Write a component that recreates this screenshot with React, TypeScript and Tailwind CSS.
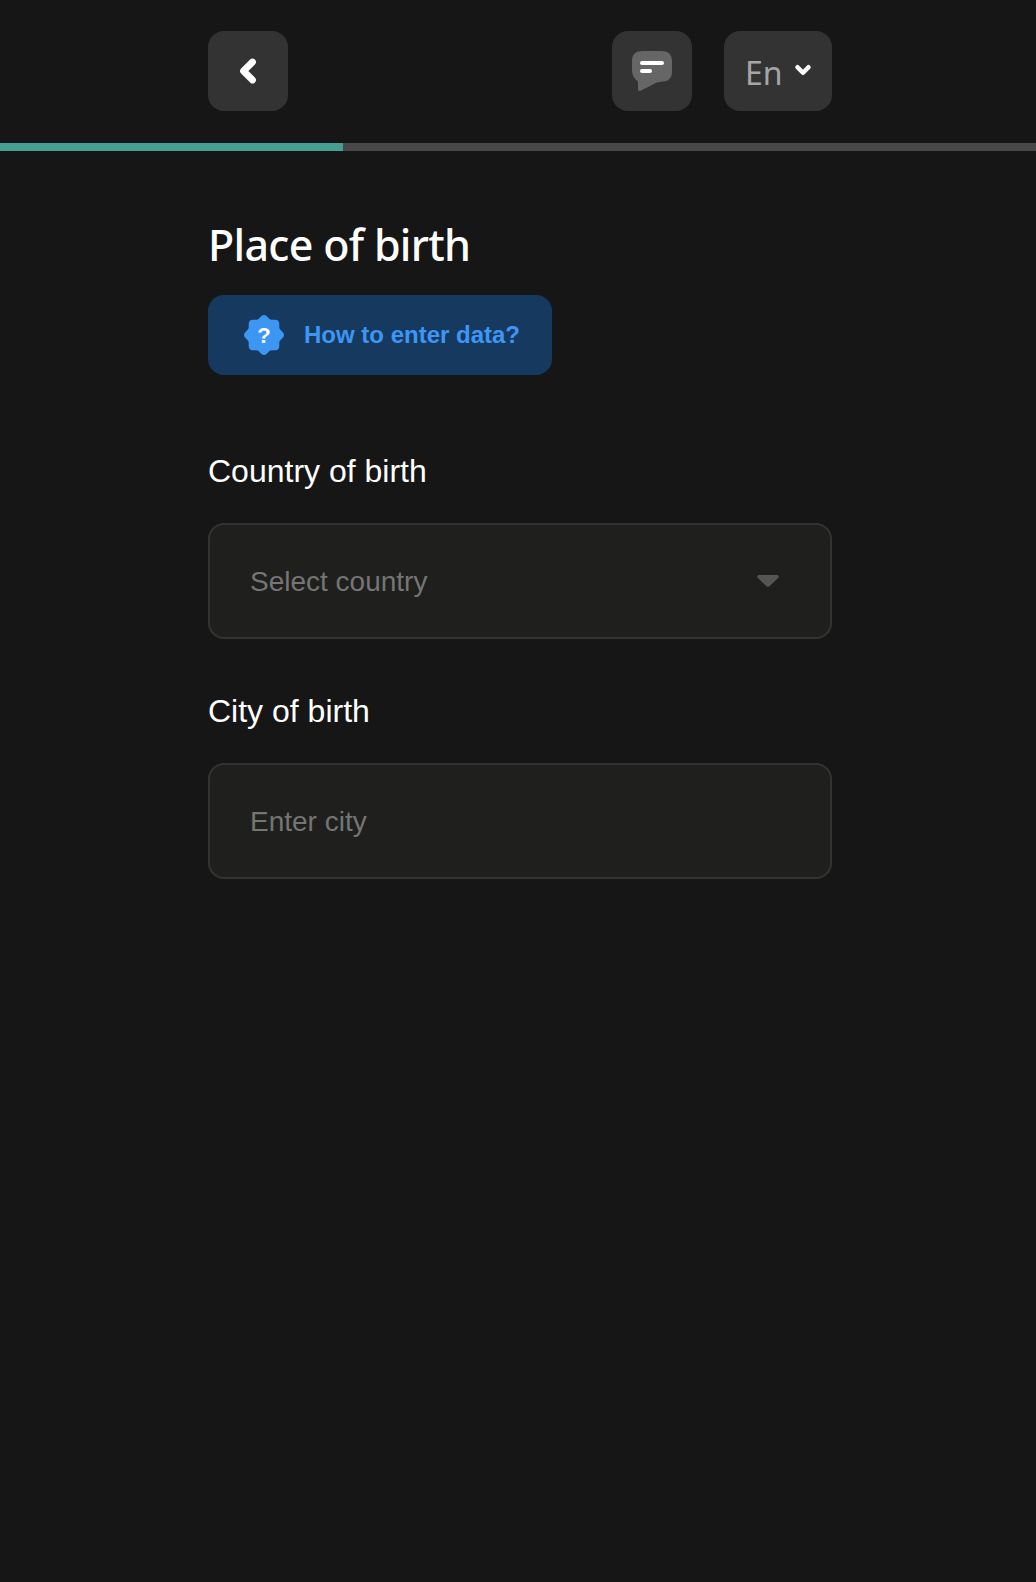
import React from 'react';
import { ChevronLeft, ChevronDown } from 'lucide-react';

const sans = "font-['Liberation_Sans',Arial,sans-serif]";
const display = "font-['Noto_Sans',sans-serif]";

const fieldBox =
  'flex h-[116px] w-full items-center justify-between rounded-[16px] border-2 border-[#333333] bg-[#1f1f1e] pl-[40px] pr-[51px]';

// wavy badge outline, 8 soft lobes
const badgePath = Array.from({ length: 96 }, (_, i) => {
  const a = (i / 96) * Math.PI * 2;
  const r = 18.4 + 1.6 * Math.cos(8 * a);
  const x = 20 + r * Math.sin(a);
  const y = 20 - r * Math.cos(a);
  return `${i === 0 ? 'M' : 'L'}${x.toFixed(2)} ${y.toFixed(2)}`;
}).join(' ') + ' Z';

const ChatIcon = () => (
  <svg width="40" height="40" viewBox="0 0 40 40" aria-hidden="true">
    <path
      d="M11 0h18c7 0 11 3 11 10v10c0 7-3 10-9 10.500-5 .3-8 1.500-11 3.500l-12 6c-1 .3-2-.2-2-1.500v-8C2 28 0 24 0 19V10C0 3 4 0 11 0z"
      fill="#666666"
    />
    <rect x="8" y="10" width="24" height="4" rx="2" fill="#ffffff" />
    <rect x="8" y="18" width="12" height="4" rx="2" fill="#ffffff" />
  </svg>
);

const HelpBadge = () => (
  <svg width="40" height="40" viewBox="0 0 40 40" aria-hidden="true">
    <path d={badgePath} fill="#3e96f4" />
    <text x="20" y="28" textAnchor="middle" fontSize="22" fontWeight="700" fill="#ffffff" fontFamily="Liberation Sans, Arial, sans-serif">
      ?
    </text>
  </svg>
);

const App: React.FC = () => {
  return (
    <div className={`min-h-[1582px] w-full bg-[#161616] ${sans}`}>
      {/* Top bar */}
      <header className="flex h-[143px] items-start pl-[208px] pr-[204px] pt-[31px]">
        <button className="flex h-[80px] w-[80px] items-center justify-center rounded-[16px] bg-[#333333]">
          <ChevronLeft size={36} strokeWidth={4.5} className="text-white" />
        </button>
        <button className="ml-auto flex h-[80px] w-[80px] items-center justify-center rounded-[16px] bg-[#333333]">
          <ChatIcon />
        </button>
        <button className="ml-[32px] flex h-[80px] w-[108px] items-center gap-[9px] rounded-[16px] bg-[#333333] pl-[21px]">
          <span className={`${display} mt-[4px] text-[32px] leading-none text-[#a6a6a6]`}>En</span>
          <ChevronDown size={22} strokeWidth={5} className="-mt-[3px] text-white" />
        </button>
      </header>

      {/* Progress */}
      <div className="h-[8px] w-full bg-[#484848]">
        <div className="h-full w-[343px] bg-[#459f90]" />
      </div>

      <main className="w-[832px] pl-[208px] pt-[66px]">
        <h1 className={`${display} text-[43px] font-medium leading-[56px] tracking-[-0.7px] text-white`}>Place of birth</h1>

        <button className="mt-[22px] flex h-[80px] w-[344px] items-center rounded-[16px] bg-[#163a5f] pl-[36px]">
          <HelpBadge />
          <span className="ml-[20px] text-[24px] font-bold leading-none text-[#3e96f4]">How to enter data?</span>
        </button>

        <label className="mt-[77px] block text-[32px] leading-[38px] text-white">Country of birth</label>
        <div className={`${fieldBox} mt-[33px]`}>
          <span className="mt-[2px] text-[28px] leading-none text-[#757575]">Select country</span>
          <svg width="22" height="12" viewBox="0 0 22 12" aria-hidden="true">
            <path d="M2 0h18c1.600 0 2.400 1.600 1.400 2.800L13 10.800c-1.100 1.200-2.900 1.200-4 0L.6 2.800C-.4 1.600.4 0 2 0z" fill="#555555" />
          </svg>
        </div>

        <label className="mt-[53px] block text-[32px] leading-[38px] text-white">City of birth</label>
        <div className={`${fieldBox} mt-[33px]`}>
          <span className="mt-[2px] text-[28px] leading-none text-[#757575]">Enter city</span>
        </div>
      </main>
    </div>
  );
};

export default App;
